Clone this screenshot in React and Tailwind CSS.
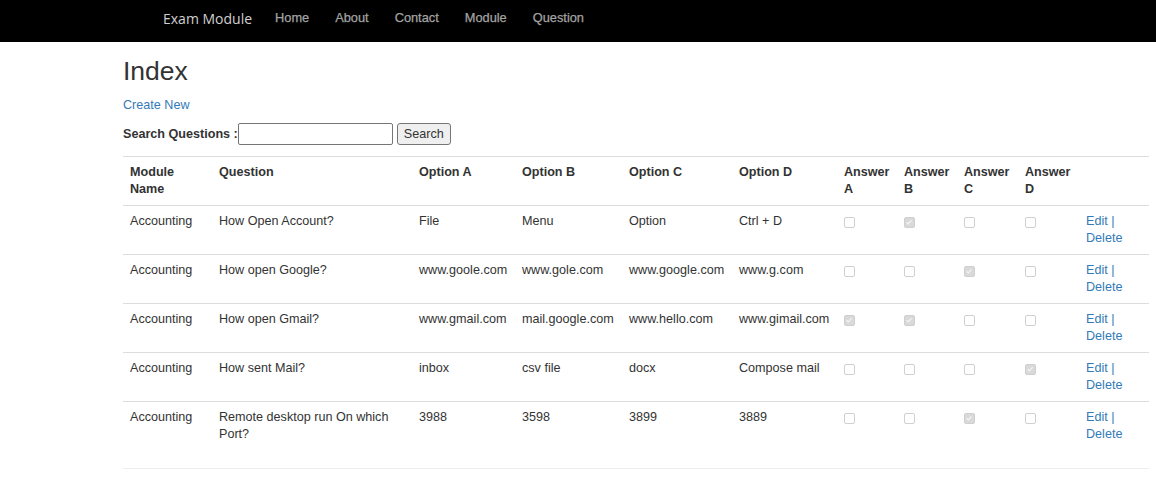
import React from "react";

const rows = [
  { m: "Accounting", q: "How Open Account?", a: "File", b: "Menu", c: "Option", d: "Ctrl + D", ans: [false, true, false, false] },
  { m: "Accounting", q: "How open Google?", a: "www.goole.com", b: "www.gole.com", c: "www.google.com", d: "www.g.com", ans: [false, false, true, false] },
  { m: "Accounting", q: "How open Gmail?", a: "www.gmail.com", b: "mail.google.com", c: "www.hello.com", d: "www.gimail.com", ans: [true, true, false, false] },
  { m: "Accounting", q: "How sent Mail?", a: "inbox", b: "csv file", c: "docx", d: "Compose mail", ans: [false, false, false, true] },
  { m: "Accounting", q: "Remote desktop run On which Port?", a: "3988", b: "3598", c: "3899", d: "3889", ans: [false, false, true, false] },
];

const widths = [89, 200, 103, 107, 110, 105, 60, 60, 61, 61, 70];

function Box({ checked }) {
  if (checked) {
    return (
      <span className="mt-[4px] block w-[11px] h-[11px] rounded-[2px] bg-[#d9d9d9] border border-[#cfcfcf]">
        <svg viewBox="0 0 11 11" className="w-[9px] h-[9px] block">
          <path d="M2 5.2 L4 7.2 L8 2.8" fill="none" stroke="#f4f4f4" strokeWidth="1.5" />
        </svg>
      </span>
    );
  }
  return <span className="mt-[4px] block w-[11px] h-[11px] rounded-[2px] bg-white border border-[#d0d0d0]" />;
}

export default function App() {
  const th = "text-left align-top font-bold p-[7px]";
  const td = "align-top p-[7px] border-t border-[#dddddd]";
  return (
    <div className="min-h-[503px] bg-white text-[#333333] text-[12.6px] leading-[17px]" style={{ fontFamily: '"Liberation Sans", Arial, sans-serif' }}>
      <nav className="h-[42px] bg-black flex items-start pl-[163px] pt-[9px]">
        <span className="text-[14px] leading-[20px] text-[#d0d0d0] mr-[10px]" style={{ fontFamily: '"Open Sans", "Noto Sans", sans-serif' }}>
          Exam Module
        </span>
        {["Home", "About", "Contact", "Module", "Question"].map((l) => (
          <a key={l} className="px-[13px] text-[#a3a3a3] text-[12.8px] leading-[17px] [-webkit-text-stroke:0.25px_#a3a3a3]">{l}</a>
        ))}
      </nav>
      <main className="pl-[123px] pr-[7px]">
        <h2 className="mt-[15px] text-[26.5px] leading-[29px] font-normal">Index</h2>
        <p className="mt-[11px]">
          <a className="text-[#337ab7]">Create New</a>
        </p>
        <form className="mt-[9px] flex items-center h-[22px]">
          <label className="font-bold">Search Questions :</label>
          <input type="text" className="w-[155px] h-[22px] border border-[#767676] rounded-[2px] bg-white" />
          <button type="button" className="ml-[4px] w-[54px] h-[22px] border border-[#767676] rounded-[3px] bg-[#efefef] text-[12.6px]">
            Search
          </button>
        </form>
        <table className="mt-[11px] w-[1026px] table-fixed border-collapse border-t border-[#dddddd]">
          <colgroup>
            {widths.map((w, i) => (
              <col key={i} style={{ width: w }} />
            ))}
          </colgroup>
          <thead>
            <tr>
              <th className={th}>Module Name</th>
              <th className={th}>Question</th>
              <th className={th}>Option A</th>
              <th className={th}>Option B</th>
              <th className={th}>Option C</th>
              <th className={th}>Option D</th>
              <th className={th}>Answer A</th>
              <th className={th}>Answer B</th>
              <th className={th}>Answer C</th>
              <th className={th}>Answer D</th>
              <th className={th}></th>
            </tr>
          </thead>
          <tbody>
            {rows.map((r, i) => (
              <tr key={i}>
                <td className={td}>{r.m}</td>
                <td className={td}>{r.q}</td>
                <td className={td + " whitespace-nowrap"}>{r.a}</td>
                <td className={td + " whitespace-nowrap"}>{r.b}</td>
                <td className={td + " whitespace-nowrap"}>{r.c}</td>
                <td className={td + " whitespace-nowrap"}>{r.d}</td>
                {r.ans.map((c, j) => (
                  <td key={j} className={td}>
                    <Box checked={c} />
                  </td>
                ))}
                <td className={td + " text-[#337ab7]"}>
                  <a>Edit</a> | <a>Delete</a>
                </td>
              </tr>
            ))}
          </tbody>
        </table>
        <hr className="mt-[18px] border-0 border-t border-[#eeeeee]" />
      </main>
    </div>
  );
}
